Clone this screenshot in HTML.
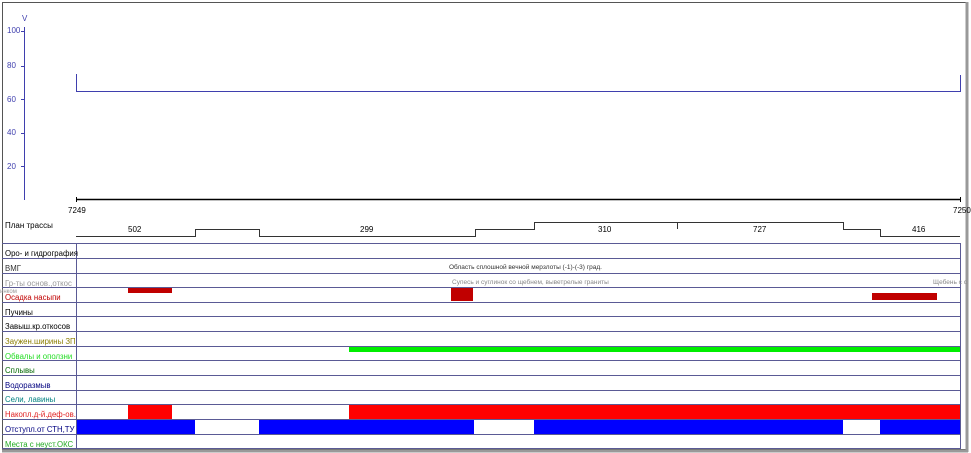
<!DOCTYPE html>
<html><head><meta charset="utf-8"><style>
html,body{margin:0;padding:0;background:#fff;width:971px;height:453px;overflow:hidden}
svg{display:block;font-family:"Liberation Sans",Arial,sans-serif}
</style></head><body>
<svg width="971" height="453" viewBox="0 0 971 453" xmlns="http://www.w3.org/2000/svg">
<rect x="2.5" y="2.5" width="964" height="447" fill="none" stroke="#555" stroke-width="1"/>
<line x1="967" y1="2" x2="967" y2="452" stroke="#999" stroke-width="3"/>
<line x1="2" y1="451" x2="968" y2="451" stroke="#999" stroke-width="3"/>
<g stroke="#3f3fae" stroke-width="1" fill="none">
<line x1="24.5" y1="27" x2="24.5" y2="200"/>
<line x1="21" y1="31.5" x2="25" y2="31.5"/>
<line x1="21" y1="66.5" x2="25" y2="66.5"/>
<line x1="21" y1="99.5" x2="25" y2="99.5"/>
<line x1="21" y1="133.5" x2="25" y2="133.5"/>
<line x1="21" y1="166.5" x2="25" y2="166.5"/>
<polyline points="76.5,74 76.5,91.5 960.5,91.5 960.5,75"/>
</g>
<g font-size="8" fill="#3f3fae">
<text x="22" y="21">V</text>
<text x="7" y="33">100</text>
<text x="7" y="68">80</text>
<text x="7" y="102">60</text>
<text x="7" y="135">40</text>
<text x="7" y="169">20</text>
</g>
<line x1="76" y1="199.5" x2="960" y2="199.5" stroke="#000" stroke-width="1.5"/>
<line x1="76.5" y1="197" x2="76.5" y2="202" stroke="#000"/>
<line x1="960.5" y1="197" x2="960.5" y2="202" stroke="#000"/>
<g font-size="8" fill="#000">
<text x="68" y="213">7249</text>
<text x="953" y="213">7250</text>
<text x="5" y="228">План трассы</text>
<text x="128" y="232">502</text>
<text x="360" y="232">299</text>
<text x="598" y="232">310</text>
<text x="753" y="232">727</text>
<text x="912" y="232">416</text>
</g>
<polyline fill="none" stroke="#333" stroke-width="1" points="76,236.5 195.5,236.5 195.5,229.5 259.5,229.5 259.5,236.5 475.5,236.5 475.5,229.5 534.5,229.5 534.5,222.5 843.5,222.5 843.5,229.5 880.5,229.5 880.5,236.5 960,236.5"/>
<line x1="677.5" y1="222" x2="677.5" y2="229" stroke="#333"/>
<rect x="128" y="287" width="44" height="6" fill="#c00000"/>
<rect x="451" y="287" width="22" height="14" fill="#c00000"/>
<rect x="872" y="293" width="65" height="7" fill="#c00000"/>
<rect x="349" y="346" width="612" height="6" fill="#00ee00"/>
<rect x="128" y="404" width="44" height="15" fill="#ff0000"/>
<rect x="349" y="404" width="612" height="15" fill="#ff0000"/>
<rect x="76" y="419" width="119" height="15" fill="#0000ff"/>
<rect x="259" y="419" width="215" height="15" fill="#0000ff"/>
<rect x="534" y="419" width="309" height="15" fill="#0000ff"/>
<rect x="880" y="419" width="81" height="15" fill="#0000ff"/>
<g stroke="#5a5a95" stroke-width="1">
<line x1="2" y1="243.5" x2="961" y2="243.5"/>
<line x1="2" y1="258.5" x2="961" y2="258.5"/>
<line x1="2" y1="273.5" x2="961" y2="273.5"/>
<line x1="2" y1="287.5" x2="961" y2="287.5"/>
<line x1="2" y1="302.5" x2="961" y2="302.5"/>
<line x1="2" y1="316.5" x2="961" y2="316.5"/>
<line x1="2" y1="331.5" x2="961" y2="331.5"/>
<line x1="2" y1="346.5" x2="961" y2="346.5"/>
<line x1="2" y1="360.5" x2="961" y2="360.5"/>
<line x1="2" y1="375.5" x2="961" y2="375.5"/>
<line x1="2" y1="390.5" x2="961" y2="390.5"/>
<line x1="2" y1="404.5" x2="961" y2="404.5"/>
<line x1="2" y1="419.5" x2="961" y2="419.5"/>
<line x1="2" y1="434.5" x2="961" y2="434.5"/>
<line x1="2" y1="448.5" x2="961" y2="448.5"/>
<line x1="76.5" y1="243" x2="76.5" y2="449"/>
<line x1="960.5" y1="243" x2="960.5" y2="449"/>
</g>
<g font-size="7.8">
<text x="5" y="256" fill="#000">Оро- и гидрография</text>
<text x="5" y="271" fill="#333">ВМГ</text>
<text x="5" y="286" fill="#999">Гр-ты основ.,откос</text>
<text x="0" y="293" fill="#999" font-size="6">инком</text>
<text x="5" y="300" fill="#c00000">Осадка насыпи</text>
<text x="5" y="315" fill="#000">Пучины</text>
<text x="5" y="329" fill="#000">Завыш.кр.откосов</text>
<text x="5" y="344" fill="#8b7d00">Заужен.ширины ЗП</text>
<text x="5" y="359" fill="#22dd22">Обвалы и оползни</text>
<text x="5" y="373" fill="#006600">Сплывы</text>
<text x="5" y="388" fill="#000080">Водоразмыв</text>
<text x="5" y="402" fill="#008080">Сели, лавины</text>
<text x="5" y="417" fill="#e02020">Накопл.д-й.деф-ов.</text>
<text x="5" y="432" fill="#000080">Отступл.от СТН,ТУ</text>
<text x="5" y="447" fill="#22aa22">Места с неуст.ОКС</text>
</g>
<g font-size="6.5">
<text x="449" y="269" fill="#333">Область сплошной вечной мерзлоты (-1)-(-3) град.</text>
<text x="452" y="284" fill="#888">Супесь и суглинок со щебнем, выветрелые граниты</text>
<text x="933" y="284" fill="#888">Щебень с с</text>
</g>
</svg>
</body></html>
